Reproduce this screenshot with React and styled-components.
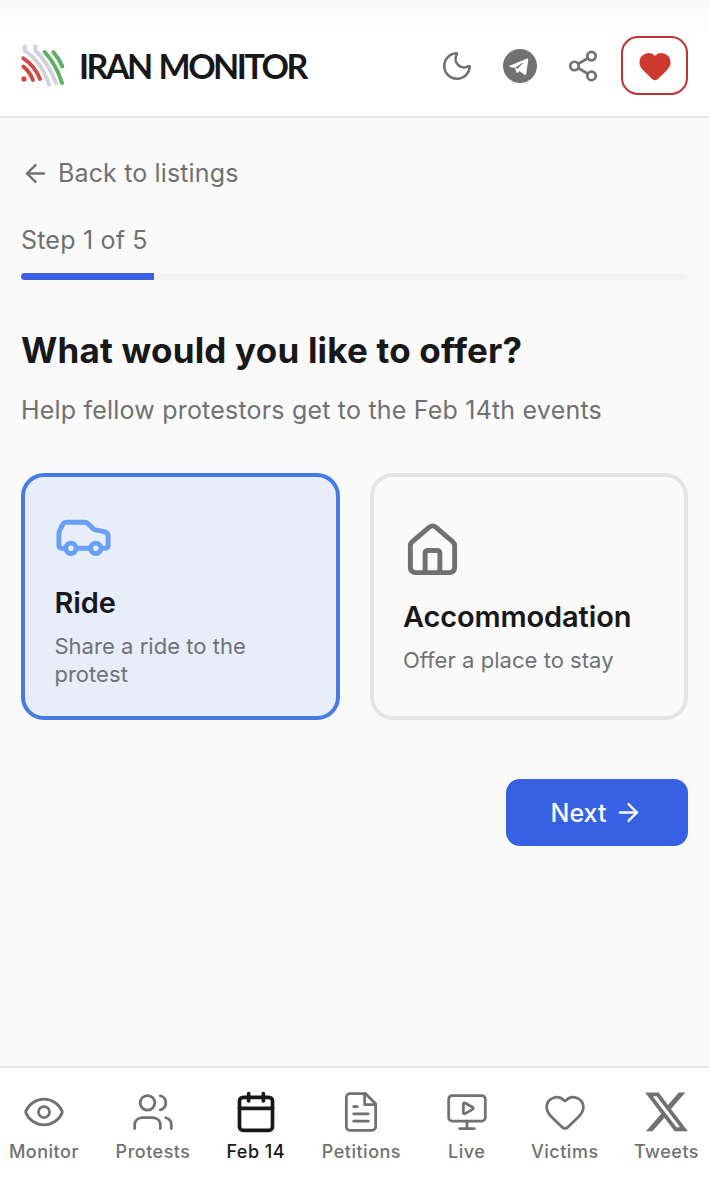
import styled, { createGlobalStyle } from "styled-components";
import {
  ArrowLeft,
  ArrowRight,
  Calendar,
  Eye,
  Heart,
  House,
  MonitorPlay,
  Moon,
  Share2,
  Users,
} from "lucide-react";

const GlobalStyle = createGlobalStyle`
  * {
    box-sizing: border-box;
  }
  body {
    margin: 0;
    background: #fafafa;
    color: #18181a;
    font-family: Inter, "Liberation Sans", sans-serif;
  }
  button {
    font-family: inherit;
    cursor: pointer;
  }
`;

const Page = styled.div`
  display: flex;
  flex-direction: column;
  height: 1200px;
`;

const Header = styled.header`
  display: flex;
  align-items: center;
  justify-content: space-between;
  height: 118px;
  padding: 14px 21px 0 20px;
  background: linear-gradient(#fafafa, #ffffff 36px);
  border-bottom: 2px solid #e4e4e4;
`;

const Brand = styled.div`
  display: flex;
  align-items: center;
  gap: 14px;
`;

const BrandName = styled.span`
  padding-top: 2px;
  font-family: Lato, "Liberation Sans", sans-serif;
  font-size: 34px;
  font-weight: 700;
  line-height: 40px;
  letter-spacing: -2.5px;
  word-spacing: 2px;
  color: #18181a;
  white-space: nowrap;
`;

const Actions = styled.div`
  display: flex;
  align-items: center;
  gap: 29px;
  color: #717171;
`;

const IconButton = styled.button`
  display: flex;
  padding: 1px 0 0;
  border: 0;
  background: none;
  color: inherit;
`;

const DonateButton = styled(IconButton)`
  align-items: center;
  justify-content: center;
  width: 67px;
  height: 59px;
  margin-left: -8px;
  border: 2px solid #bf3236;
  border-radius: 17px;
  color: #cc3a30;
`;

const Main = styled.main`
  flex: 1;
  padding: 37px 21px 0;
`;

const BackLink = styled.a`
  display: flex;
  align-items: center;
  gap: 8px;
  font-size: 25px;
  line-height: 36px;
  letter-spacing: 0.14px;
  color: #717171;
`;

const StepLabel = styled.p`
  margin: 31px 0 15px;
  font-size: 25px;
  line-height: 36px;
  letter-spacing: 0.2px;
  color: #717171;
`;

const Track = styled.div`
  height: 7px;
  border-radius: 4px;
  background: #f4f4f5;
  overflow: hidden;
`;

const Progress = styled.div`
  height: 100%;
  background: #3860e0;
`;

const Title = styled.h1`
  margin: 45px 0 0;
  font-size: 35px;
  font-weight: 700;
  line-height: 50px;
  letter-spacing: 0.2px;
`;

const Subtitle = styled.p`
  margin: 17px 0 0;
  font-size: 25px;
  line-height: 36px;
  letter-spacing: 0.2px;
  color: #717171;
`;

const Options = styled.div`
  display: grid;
  grid-template-columns: 1fr 1fr;
  gap: 30px;
  margin-top: 45px;
`;

const Option = styled.button`
  display: flex;
  flex-direction: column;
  align-items: flex-start;
  justify-content: center;
  height: 247px;
  padding: 2px 29.4px 0;
  border: 4px solid ${(p) => (p.$active ? "#467be6" : "#e4e4e4")};
  border-radius: 23px;
  background: ${(p) => (p.$active ? "#e7edf9" : "transparent")};
  color: ${(p) => (p.$active ? "#68a1f4" : "#717171")};
  text-align: left;
`;

const OptionName = styled.span`
  margin-top: 16px;
  font-size: 29px;
  font-weight: 600;
  line-height: 42px;
  letter-spacing: -0.12px;
  color: #18181a;
`;

const OptionText = styled.span`
  margin-top: 8px;
  font-size: 22px;
  line-height: 28px;
  letter-spacing: 0.04px;
  color: #717176;
`;

const Footer = styled.div`
  display: flex;
  justify-content: flex-end;
  margin-top: 59px;
`;

const NextButton = styled.button`
  display: flex;
  align-items: center;
  justify-content: center;
  gap: 8px;
  width: 182px;
  height: 67px;
  border: 0;
  border-radius: 14px;
  background: #3661e2;
  color: #f8fafc;
  font-size: 25px;
  font-weight: 500;
`;

const TabBar = styled.nav`
  display: flex;
  gap: 36.2px;
  height: 134px;
  padding: 22px 0 0 8.4px;
  border-top: 2px solid #e4e4e4;
  background: #fefefe;
`;

const Tab = styled.a`
  display: flex;
  flex: none;
  flex-direction: column;
  align-items: center;
  width: ${(p) => p.$width}px;
  color: ${(p) => (p.$active ? "#18181a" : "#717171")};
`;

const TabLabel = styled.span`
  margin-top: 5px;
  font-size: 18px;
  font-weight: 500;
  line-height: 26px;
  letter-spacing: 0.5px;
  white-space: nowrap;
`;

const Logo = () => (
  <svg width="45" height="45" viewBox="60 70 135 135" fill="none" strokeWidth="12" strokeLinecap="round" strokeLinejoin="round">
    <g stroke="#d2d2da">
      <path d="M74 80V93C108 115 135 155 147 195" />
      <path d="M106 80V93C132 118 155 155 168 190" />
    </g>
    <g stroke="#5fae62">
      <path d="M134 97C159 124 176 158 186 190" />
      <path d="M160 97C171 110 180 124 187 140" />
    </g>
    <g stroke="#cf4a48">
      <path d="M70 116C92 130 110 153 120 178" />
      <path d="M70 141C82 150 92 164 99 181" />
    </g>
    <circle cx="72" cy="178" r="8" fill="#cf4a48" />
  </svg>
);

const TelegramIcon = () => (
  <svg width="34" height="34" viewBox="0 0 34 34">
    <circle cx="17" cy="17" r="17" fill="currentColor" />
    <path d="M6.8 16.8 24 9.6c.8-.3 1.4.1 1.3 1L23.2 25c-.2 1.1-1 1.3-1.8.7l-5-3.6-1.900 1.800c-.4.4-.9.2-1.100-.3l-1.400-4.500-5.100-1.200c-.8-.2-.8-.8-.1-1.100Z" fill="#fff" />
    <path d="M12.200 19.100 19.800 13.900 14.600 19.500" fill="currentColor" stroke="currentColor" strokeWidth=".6" strokeLinejoin="round" />
  </svg>
);

const CarIcon = () => (
  <svg width="59" height="59" viewBox="0 0 24 24" fill="none" stroke="currentColor" strokeWidth="2" strokeLinecap="round" strokeLinejoin="round">
    <path d="M4.600 16.800H3a1 1 0 0 1-1-1v-4.800c0-.6.100-1 .3-1.500L3.500 7.200A2 2 0 0 1 5.300 6.200h7.200c.6 0 1 .2 1.400.6l1.900 1.900c.3.300.6.5 1 .6l3.600.7c1 .2 1.600.9 1.600 1.900v3.900a1 1 0 0 1-1 1h-1.500" />
    <path d="M9 16.800h6" />
    <circle cx="6.900" cy="16.800" r="2.100" />
    <circle cx="17" cy="16.800" r="2.100" />
  </svg>
);

const PetitionIcon = () => (
  <svg width="44" height="44" viewBox="0 0 24 24" fill="none" stroke="currentColor" strokeWidth="1.5" strokeLinecap="round" strokeLinejoin="round">
    <path d="M14.500 2H6a2 2 0 0 0-2 2v16a2 2 0 0 0 2 2h12a2 2 0 0 0 2-2V7.500L14.500 2z" />
    <path d="M14 2v6h6M16 13H8M16 17H8M10 9H8" />
  </svg>
);

const XIcon = () => (
  <svg width="45" height="44" viewBox="18 20 478 474" fill="currentColor">
    <path d="M389.200 48h70.600L305.600 224.200 487 464H345L233.700 318.600 106.500 464H35.800L200.700 275.500 26.800 48H172.400L272.900 180.900 389.200 48zM364.400 421.800h39.100L151.100 88h-42L364.400 421.800z" />
  </svg>
);

const tabs = [
  { label: "Monitor", width: 71, icon: <Eye size={44} strokeWidth={1.5} /> },
  { label: "Protests", width: 75, icon: <Users size={44} strokeWidth={1.5} /> },
  { label: "Feb 14", width: 58, icon: <Calendar size={44} strokeWidth={2} />, active: true },
  { label: "Petitions", width: 81, icon: <PetitionIcon /> },
  { label: "Live", width: 57, icon: <MonitorPlay size={44} strokeWidth={1.5} /> },
  { label: "Victims", width: 67, icon: <Heart size={44} strokeWidth={1.5} /> },
  { label: "Tweets", width: 64, icon: <XIcon /> },
];

const App = () => {
  return (
    <Page>
      <GlobalStyle />
      <Header>
        <Brand>
          <Logo />
          <BrandName>IRAN MONITOR</BrandName>
        </Brand>
        <Actions>
          <IconButton>
            <Moon size={34} strokeWidth={1.8} />
          </IconButton>
          <IconButton>
            <TelegramIcon />
          </IconButton>
          <IconButton>
            <Share2 size={34} strokeWidth={1.9} />
          </IconButton>
          <DonateButton>
            <Heart size={34} fill="currentColor" />
          </DonateButton>
        </Actions>
      </Header>
      <Main>
        <BackLink>
          <ArrowLeft size={29} />
          Back to listings
        </BackLink>
        <StepLabel>Step 1 of 5</StepLabel>
        <Track>
          <Progress style={{ width: `${(1 / 5) * 100}%` }} />
        </Track>
        <Title>What would you like to offer?</Title>
        <Subtitle>Help fellow protestors get to the Feb 14th events</Subtitle>
        <Options>
          <Option $active>
            <CarIcon />
            <OptionName>Ride</OptionName>
            <OptionText>Share a ride to the protest</OptionText>
          </Option>
          <Option>
            <House size={59} />
            <OptionName>Accommodation</OptionName>
            <OptionText>Offer a place to stay</OptionText>
          </Option>
        </Options>
        <Footer>
          <NextButton>
            Next
            <ArrowRight size={29} />
          </NextButton>
        </Footer>
      </Main>
      <TabBar>
        {tabs.map((tab) => (
          <Tab key={tab.label} $width={tab.width} $active={tab.active}>
            {tab.icon}
            <TabLabel>{tab.label}</TabLabel>
          </Tab>
        ))}
      </TabBar>
    </Page>
  );
};

export default App;
